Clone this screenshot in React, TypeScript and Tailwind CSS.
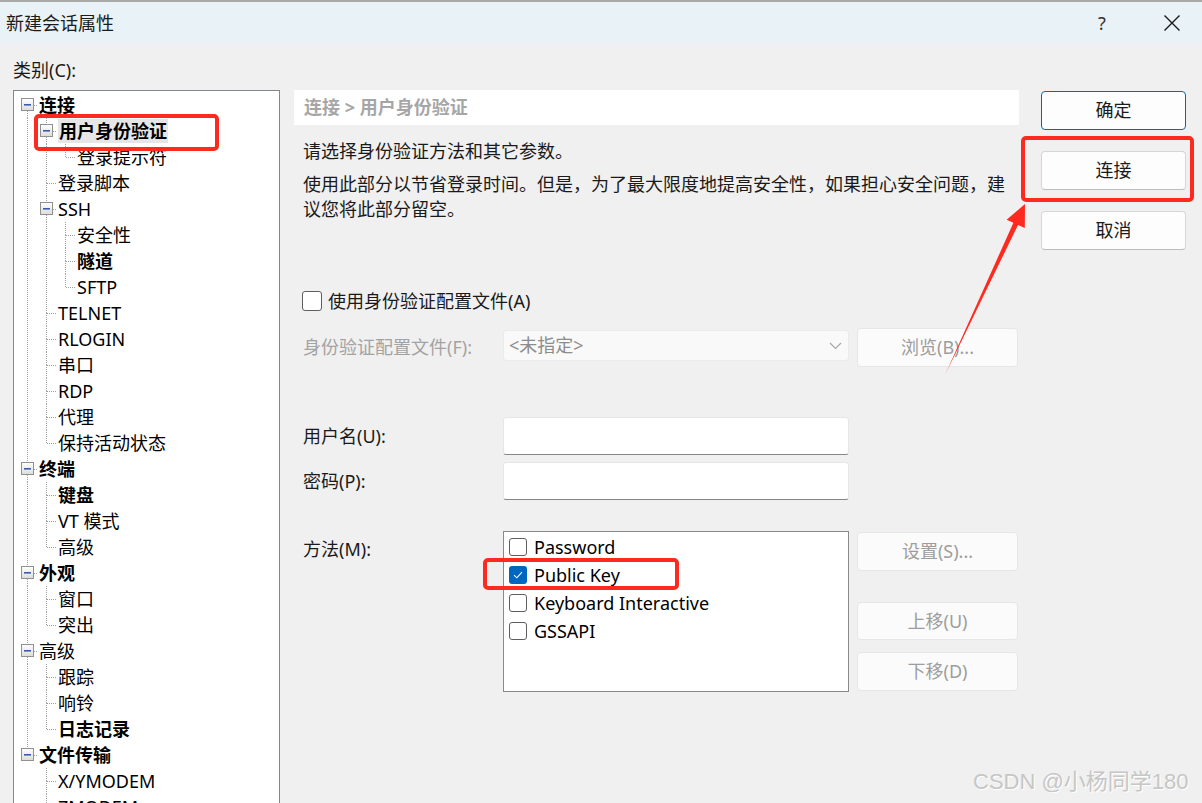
import React from "react";

type TreeNode = {
  label: string;
  bold?: boolean;
  selected?: boolean;
  children?: TreeNode[];
};

type Row = {
  label: string;
  bold?: boolean;
  selected?: boolean;
  level: number;
  expander: boolean;
  first: boolean;
  last: boolean;
  ancestorsLast: boolean[];
};

const tree: TreeNode[] = [
  {
    label: "连接",
    bold: true,
    children: [
      { label: "用户身份验证", bold: true, selected: true, children: [{ label: "登录提示符" }] },
      { label: "登录脚本" },
      {
        label: "SSH",
        children: [{ label: "安全性" }, { label: "隧道", bold: true }, { label: "SFTP" }],
      },
      { label: "TELNET" },
      { label: "RLOGIN" },
      { label: "串口" },
      { label: "RDP" },
      { label: "代理" },
      { label: "保持活动状态" },
    ],
  },
  {
    label: "终端",
    bold: true,
    children: [{ label: "键盘", bold: true }, { label: "VT 模式" }, { label: "高级" }],
  },
  { label: "外观", bold: true, children: [{ label: "窗口" }, { label: "突出" }] },
  {
    label: "高级",
    children: [{ label: "跟踪" }, { label: "响铃" }, { label: "日志记录", bold: true }],
  },
  { label: "文件传输", bold: true, children: [{ label: "X/YMODEM" }, { label: "ZMODEM" }] },
];

function flatten(nodes: TreeNode[], level: number, ancestorsLast: boolean[], out: Row[]) {
  nodes.forEach((n, i) => {
    const last = i === nodes.length - 1;
    out.push({
      label: n.label,
      bold: n.bold,
      selected: n.selected,
      level,
      expander: !!n.children,
      first: i === 0,
      last,
      ancestorsLast,
    });
    if (n.children) flatten(n.children, level + 1, [...ancestorsLast, last], out);
  });
  return out;
}

const rows = flatten(tree, 0, [], []);

const dot = { stroke: "#a0a0a0", strokeWidth: 1, strokeDasharray: "1 1", shapeRendering: "crispEdges" as const };

function TreeRow({ row }: { row: Row }) {
  const w = (row.level + 1) * 19;
  const cx = row.level * 19 + 9.5;
  return (
    <div className="flex h-[26px] items-center">
      <svg width={w} height={26} className="shrink-0">
        <defs>
          <linearGradient id="exp" x1="0" y1="0" x2="0" y2="1">
            <stop offset="0" stopColor="#ffffff" />
            <stop offset="1" stopColor="#dcdcdc" />
          </linearGradient>
        </defs>
        {row.ancestorsLast.map((isLast, c) =>
          isLast ? null : <line key={c} x1={c * 19 + 9.5} y1={0} x2={c * 19 + 9.5} y2={26} {...dot} />
        )}
        {!(row.level === 0 && row.first) && <line x1={cx} y1={0} x2={cx} y2={13} {...dot} />}
        {!row.last && <line x1={cx} y1={13} x2={cx} y2={26} {...dot} />}
        <line x1={cx} y1={13.5} x2={w} y2={13.5} {...dot} />
        {row.expander && (
          <g>
            <rect x={cx - 6} y={6.5} width={12} height={12} fill="url(#exp)" stroke="#919191" shapeRendering="crispEdges" />
            <rect x={cx - 3.5} y={12} width={7} height={1.6} fill="#3b5bb0" />
          </g>
        )}
      </svg>
      <span
        className={`ml-[2px] whitespace-nowrap text-[18px] leading-[24px] text-black ${row.bold ? "font-bold" : ""} ${
          row.selected ? "bg-[#e6e6e6] px-[1px]" : ""
        }`}
      >
        {row.label}
      </span>
    </div>
  );
}

function Check({ checked, size = 18 }: { checked?: boolean; size?: number }) {
  return checked ? (
    <div
      className="flex shrink-0 items-center justify-center rounded-[3px] bg-[#0067c0]"
      style={{ width: size, height: size }}
    >
      <svg width="10" height="8" viewBox="0 0 10 8">
        <path d="M1 4.2 L3.8 6.8 L9 1.2" fill="none" stroke="#fff" strokeWidth="1.1" />
      </svg>
    </div>
  ) : (
    <div
      className="shrink-0 rounded-[3px] border border-[#5f5f5f] bg-white"
      style={{ width: size, height: size }}
    />
  );
}

export default function App() {
  return (
    <div className="relative h-[803px] w-[1202px] overflow-hidden bg-[#f0f0f0] font-['Noto_Sans','Noto_Sans_CJK_SC',sans-serif] text-[#1a1a1a]">
      {/* Title bar */}
      <div className="flex h-[44px] items-center border-t-2 border-[#a9a9a9] bg-[#e9f2f6]">
        <span className="pl-[6px] text-[18px] leading-[24px] text-[#1b1b1b]">新建会话属性</span>
        <span className="ml-auto w-[40px] text-center text-[18px] text-[#333]">?</span>
        <div className="ml-[30px] mr-[10px] flex w-[40px] justify-center">
          <svg width="18" height="18" viewBox="0 0 18 18">
            <path d="M1.5 1.5 L16.5 16.5 M16.5 1.5 L1.5 16.5" stroke="#1a1a1a" strokeWidth="1.4" />
          </svg>
        </div>
      </div>

      <div className="flex">
        {/* Category tree */}
        <div className="ml-[13px] w-[267px] shrink-0">
          <div className="mt-[14px] h-[24px] text-[18px] leading-[24px]">类别(C):</div>
          <div className="mt-[8px] h-[720px] overflow-hidden border border-[#828790] bg-white pl-[4px] pt-[1px]">
            {rows.map((r, i) => (
              <TreeRow key={i} row={r} />
            ))}
          </div>
        </div>

        {/* Page content */}
        <div className="ml-[14px] mt-[46px] w-[725px] shrink-0">
          <div className="flex h-[35px] items-center bg-white pl-[10px] text-[18px] font-bold text-[#a6a6a6]">
            连接 &gt; 用户身份验证
          </div>
          <p className="mt-[14px] pl-[9px] text-[18px] leading-[25px]">请选择身份验证方法和其它参数。</p>
          <p className="mt-[8px] whitespace-nowrap pl-[9px] text-[18px] leading-[25px]">
            使用此部分以节省登录时间。但是，为了最大限度地提高安全性，如果担心安全问题，建
            <br />
            议您将此部分留空。
          </p>

          <div className="mt-[66px] flex h-[26px] items-center gap-[6px] pl-[8px]">
            <Check size={20} />
            <span className="text-[18px] leading-[24px]">使用身份验证配置文件(A)</span>
          </div>

          <div className="mt-[14px] flex h-[39px] items-center">
            <span className="w-[209px] shrink-0 pl-[9px] text-[18px] text-[#a3a3a3]">身份验证配置文件(F):</span>
            <div className="mt-[2px] flex h-[31px] w-[346px] shrink-0 items-center self-start rounded-[3px] border border-[#ebebeb] bg-[#f9f9f9] pl-[5px] pr-[6px]">
              <span className="text-[18px] text-[#8c8c8c]">&lt;未指定&gt;</span>
              <svg className="ml-auto" width="13" height="8" viewBox="0 0 13 8">
                <path d="M1 1 L6.5 6.5 L12 1" fill="none" stroke="#a8a8a8" strokeWidth="1.2" />
              </svg>
            </div>
            <div className="ml-[8px] flex h-[39px] w-[161px] items-center justify-center rounded-[4px] border border-[#e6e6e6] bg-[#fbfbfb] text-[18px] text-[#9d9d9d]">
              浏览(B)...
            </div>
          </div>

          <div className="mt-[50px] flex h-[38px] items-center">
            <span className="w-[209px] shrink-0 pl-[9px] text-[18px]">用户名(U):</span>
            <div className="h-[38px] w-[346px] rounded-[3px] border border-[#e6e6e6] border-b-[#868686] bg-white" />
          </div>
          <div className="mt-[7px] flex h-[38px] items-center">
            <span className="w-[209px] shrink-0 pl-[9px] text-[18px]">密码(P):</span>
            <div className="h-[38px] w-[346px] rounded-[3px] border border-[#e6e6e6] border-b-[#868686] bg-white" />
          </div>

          <div className="mt-[31px] flex items-start">
            <span className="mt-[5px] w-[209px] shrink-0 pl-[9px] text-[18px] leading-[26px]">方法(M):</span>
            <div className="h-[161px] w-[346px] shrink-0 border border-[#8a8a8a] bg-white pl-[5px] pt-[1px]">
              {[
                { label: "Password" },
                { label: "Public Key", checked: true },
                { label: "Keyboard Interactive" },
                { label: "GSSAPI" },
              ].map((m) => (
                <div key={m.label} className="flex h-[28px] items-center gap-[7px]">
                  <Check checked={m.checked} />
                  <span className="text-[18px] leading-[24px] text-black">{m.label}</span>
                </div>
              ))}
            </div>
            <div className="ml-[8px] flex w-[161px] flex-col">
              <div className="mt-[1px] flex h-[39px] items-center justify-center rounded-[4px] border border-[#e6e6e6] bg-[#fbfbfb] text-[18px] text-[#9d9d9d]">
                设置(S)...
              </div>
              <div className="mt-[31px] flex h-[38px] items-center justify-center rounded-[4px] border border-[#e6e6e6] bg-[#fbfbfb] text-[18px] text-[#9d9d9d]">
                上移(U)
              </div>
              <div className="mt-[12px] flex h-[39px] items-center justify-center rounded-[4px] border border-[#e6e6e6] bg-[#fbfbfb] text-[18px] text-[#9d9d9d]">
                下移(D)
              </div>
            </div>
          </div>
        </div>

        {/* Dialog buttons */}
        <div className="ml-[22px] mt-[47px] flex w-[145px] shrink-0 flex-col">
          <div className="flex h-[39px] items-center justify-center rounded-[4px] border border-[#0067c0] bg-[#fdfdfd] text-[18px]">
            确定
          </div>
          <div className="mt-[21px] flex h-[39px] items-center justify-center rounded-[4px] border border-[#d6d6d6] border-b-[#bdbdbd] bg-[#fdfdfd] text-[18px]">
            连接
          </div>
          <div className="mt-[21px] flex h-[39px] items-center justify-center rounded-[4px] border border-[#d6d6d6] border-b-[#bdbdbd] bg-[#fdfdfd] text-[18px]">
            取消
          </div>
        </div>
      </div>

      {/* Annotations */}
      <div className="pointer-events-none absolute left-[34px] top-[114px] h-[37px] w-[185px] rounded-[5px] border-[4px] border-[#ff2a1f]" />
      <div className="pointer-events-none absolute left-[1021px] top-[136px] h-[66px] w-[173px] rounded-[5px] border-[4px] border-[#ff2a1f]" />
      <div className="pointer-events-none absolute left-[483px] top-[558px] h-[32px] w-[196px] rounded-[5px] border-[4px] border-[#ff2a1f]" />
      <svg className="pointer-events-none absolute left-0 top-0" width="1202" height="803">
        <polygon
          points="945,375 1013.4,222.8 1006.6,219.7 1025,204 1024.8,228.1 1018,225"
          fill="#ff2a1f"
        />
      </svg>

      <div className="pointer-events-none absolute left-[973px] top-[768px] font-['Liberation_Sans','Noto_Sans_CJK_SC',sans-serif] text-[22px] leading-[28px] text-[#c6c6c6] [text-shadow:1px_1px_0_#ffffff]">
        CSDN @小杨同学180
      </div>
    </div>
  );
}
